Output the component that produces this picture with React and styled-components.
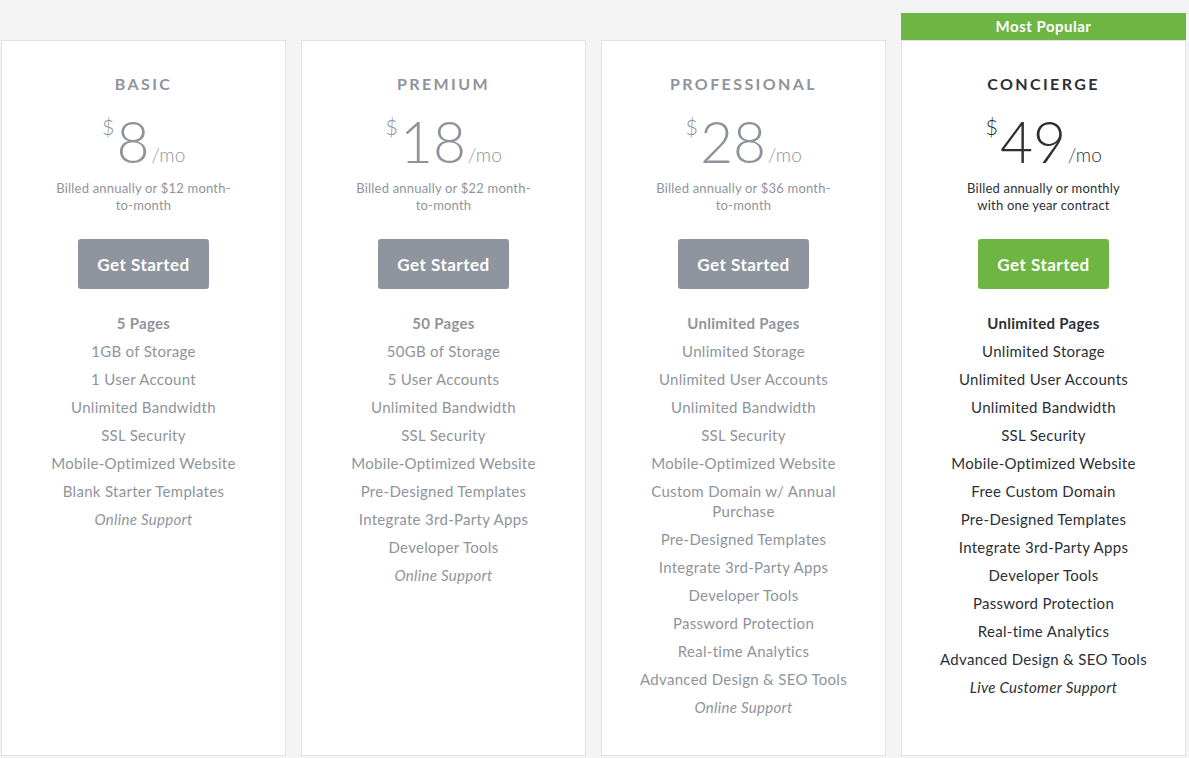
import React from "react";
import styled, { createGlobalStyle } from "styled-components";

const plans = [
  {
    name: "BASIC",
    price: 8,
    billed: ["Billed annually or $12 month-", "to-month"],
    features: [
      "5 Pages",
      "1GB of Storage",
      "1 User Account",
      "Unlimited Bandwidth",
      "SSL Security",
      "Mobile-Optimized Website",
      "Blank Starter Templates",
    ],
    support: "Online Support",
  },
  {
    name: "PREMIUM",
    price: 18,
    billed: ["Billed annually or $22 month-", "to-month"],
    features: [
      "50 Pages",
      "50GB of Storage",
      "5 User Accounts",
      "Unlimited Bandwidth",
      "SSL Security",
      "Mobile-Optimized Website",
      "Pre-Designed Templates",
      "Integrate 3rd-Party Apps",
      "Developer Tools",
    ],
    support: "Online Support",
  },
  {
    name: "PROFESSIONAL",
    price: 28,
    billed: ["Billed annually or $36 month-", "to-month"],
    features: [
      "Unlimited Pages",
      "Unlimited Storage",
      "Unlimited User Accounts",
      "Unlimited Bandwidth",
      "SSL Security",
      "Mobile-Optimized Website",
      "Custom Domain w/ Annual Purchase",
      "Pre-Designed Templates",
      "Integrate 3rd-Party Apps",
      "Developer Tools",
      "Password Protection",
      "Real-time Analytics",
      "Advanced Design & SEO Tools",
    ],
    support: "Online Support",
  },
  {
    name: "CONCIERGE",
    price: 49,
    popular: true,
    billed: ["Billed annually or monthly", "with one year contract"],
    features: [
      "Unlimited Pages",
      "Unlimited Storage",
      "Unlimited User Accounts",
      "Unlimited Bandwidth",
      "SSL Security",
      "Mobile-Optimized Website",
      "Free Custom Domain",
      "Pre-Designed Templates",
      "Integrate 3rd-Party Apps",
      "Developer Tools",
      "Password Protection",
      "Real-time Analytics",
      "Advanced Design & SEO Tools",
    ],
    support: "Live Customer Support",
  },
];

const GlobalStyle = createGlobalStyle`
  html, body {
    margin: 0;
    padding: 0;
    background: #f4f4f4;
    font-family: Lato, "Open Sans", sans-serif;
  }
`;

const App = () => {
  return (
    <>
      <GlobalStyle />
      <Page>
        {plans.map((plan) => (
          <Column key={plan.name}>
            <Banner $show={plan.popular}>
              {plan.popular ? "Most Popular" : ""}
            </Banner>
            <Card $dark={plan.popular}>
              <PlanName>{plan.name}</PlanName>
              <PriceRow>
                <Currency>$</Currency>
                <Amount>{plan.price}</Amount>
                <Per>/mo</Per>
              </PriceRow>
              <Billed>
                {plan.billed[0]}
                <br />
                {plan.billed[1]}
              </Billed>
              <StartButton $green={plan.popular}>Get Started</StartButton>
              <Features>
                {plan.features.map((f, i) => (
                  <Feature key={f} $bold={i === 0}>
                    {f}
                  </Feature>
                ))}
                <Feature $italic>{plan.support}</Feature>
              </Features>
            </Card>
          </Column>
        ))}
      </Page>
    </>
  );
};

const Page = styled.div`
  display: flex;
  gap: 15px;
  padding: 13px 0 2px 1px;
  height: 758px;
  box-sizing: border-box;
`;

const Column = styled.div`
  width: 285px;
  display: flex;
  flex-direction: column;
`;

const Banner = styled.div`
  height: 27px;
  flex-shrink: 0;
  background: ${(p) => (p.$show ? "#6db643" : "transparent")};
  color: #fff;
  font-weight: 700;
  font-size: 15px;
  letter-spacing: 0.5px;
  line-height: 27px;
  text-align: center;
`;

const Card = styled.div`
  flex: 1;
  background: #fff;
  border: 1px solid #e2e2e2;
  display: flex;
  flex-direction: column;
  align-items: center;
  padding-top: 33px;
  color: ${(p) => (p.$dark ? "#2c2f36" : "#8f949c")};
`;

const PlanName = styled.h2`
  margin: 0;
  font-size: 16px;
  font-weight: 700;
  letter-spacing: 2.4px;
  line-height: 20px;
`;

const PriceRow = styled.div`
  display: flex;
  align-items: flex-start;
  margin-top: 17px;
  height: 60px;
`;

const Currency = styled.span`
  font-size: 22px;
  font-weight: 300;
  line-height: 22px;
  margin-top: 5px;
  margin-right: 2px;
`;

const Amount = styled.span`
  font-size: 57px;
  font-weight: 300;
  line-height: 56px;
  margin-top: 2px;
`;

const Per = styled.span`
  font-size: 19px;
  font-weight: 300;
  align-self: flex-end;
  line-height: 19px;
  margin-bottom: 7px;
  margin-left: 2px;
`;

const Billed = styled.p`
  margin: 9px 0 0;
  font-size: 13px;
  line-height: 17px;
  letter-spacing: 0.2px;
  text-align: center;
`;

const StartButton = styled.button`
  margin-top: 25px;
  width: 131px;
  height: 50px;
  border: none;
  border-radius: 3px;
  background: ${(p) => (p.$green ? "#6db643" : "#8f959e")};
  color: #fff;
  font-family: Lato, sans-serif;
  font-weight: 700;
  font-size: 17px;
  letter-spacing: 0.5px;
  cursor: pointer;
`;

const Features = styled.ul`
  list-style: none;
  margin: 24px 0 0;
  padding: 0 20px;
  display: flex;
  flex-direction: column;
  gap: 8px;
  align-items: center;
`;

const Feature = styled.li`
  font-size: 15px;
  line-height: 20px;
  letter-spacing: 0.3px;
  text-align: center;
  max-width: 215px;
  font-weight: ${(p) => (p.$bold ? 700 : 400)};
  font-style: ${(p) => (p.$italic ? "italic" : "normal")};
`;

export default App;
